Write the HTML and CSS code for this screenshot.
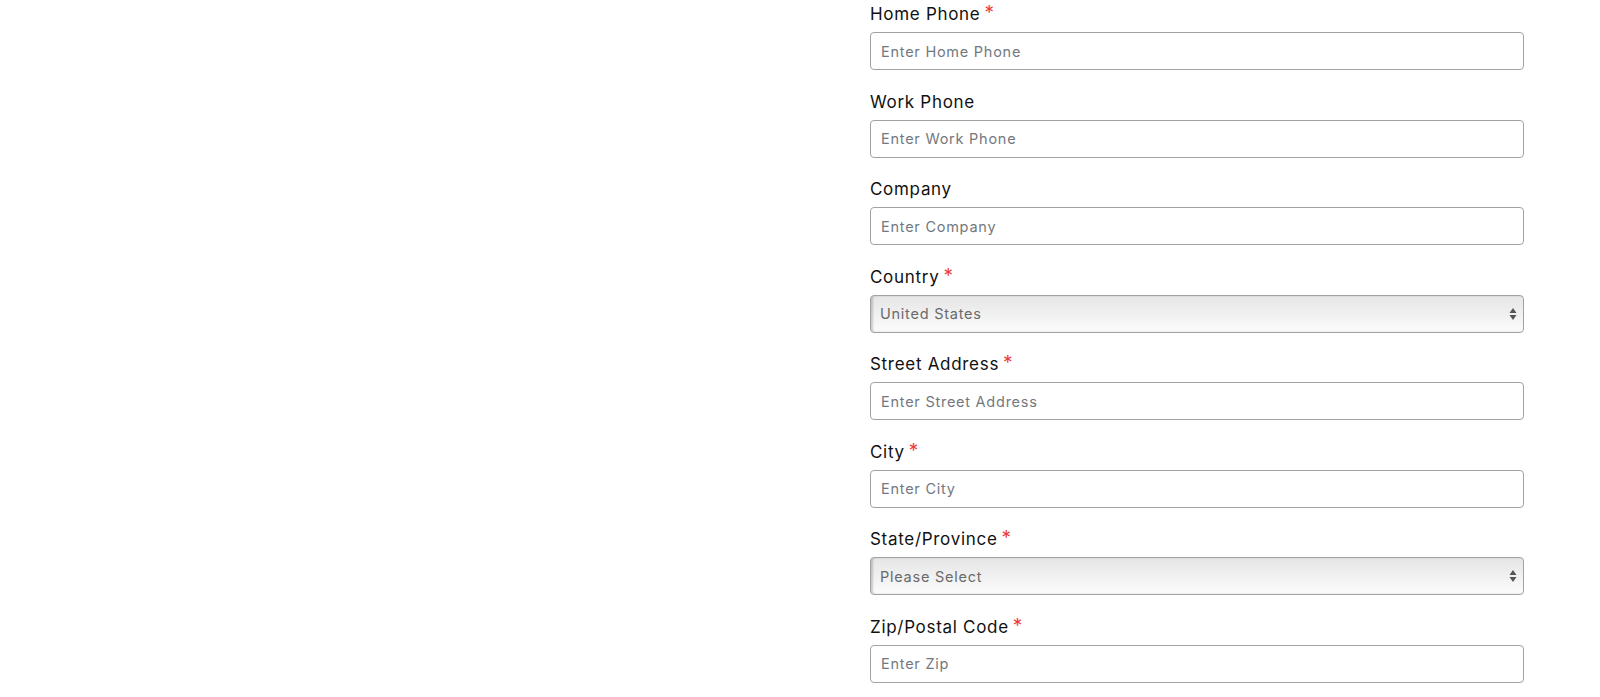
FILE: index.html
```html
<!DOCTYPE html>
<html lang="en">
<head>
<meta charset="utf-8">
<title>Form</title>
<link rel="stylesheet" href="styles.css">
</head>
<body>
<div class="page">
  <div class="spacer"></div>
  <form class="form">
    <div class="field">
      <label class="label">Home Phone<span class="req">*</span></label>
      <input class="input" type="text" placeholder="Enter Home Phone">
    </div>
    <div class="field">
      <label class="label">Work Phone</label>
      <input class="input" type="text" placeholder="Enter Work Phone">
    </div>
    <div class="field">
      <label class="label">Company</label>
      <input class="input" type="text" placeholder="Enter Company">
    </div>
    <div class="field">
      <label class="label">Country<span class="req">*</span></label>
      <div class="select-wrap">
        <select class="select"><option>United States</option></select>
        <svg class="arrows" width="8" height="14" viewBox="0 0 8 14"><path d="M4 1 L7.5 6 L0.5 6 Z M4 13 L7.5 8 L0.5 8 Z" fill="#555"/></svg>
      </div>
    </div>
    <div class="field">
      <label class="label">Street Address<span class="req">*</span></label>
      <input class="input" type="text" placeholder="Enter Street Address">
    </div>
    <div class="field">
      <label class="label">City<span class="req">*</span></label>
      <input class="input" type="text" placeholder="Enter City">
    </div>
    <div class="field">
      <label class="label">State/Province<span class="req">*</span></label>
      <div class="select-wrap">
        <select class="select"><option>Please Select</option></select>
        <svg class="arrows" width="8" height="14" viewBox="0 0 8 14"><path d="M4 1 L7.5 6 L0.5 6 Z M4 13 L7.5 8 L0.5 8 Z" fill="#555"/></svg>
      </div>
    </div>
    <div class="field">
      <label class="label">Zip/Postal Code<span class="req">*</span></label>
      <input class="input" type="text" placeholder="Enter Zip">
    </div>
  </form>
</div>
</body>
</html>
```
FILE: styles.css
```css
html, body {
  margin: 0;
  padding: 0;
  background: #ffffff;
}
body {
  font-family: Inter, "Open Sans", "Liberation Sans", sans-serif;
  color: #111;
  overflow: hidden;
}
.page {
  display: grid;
  grid-template-columns: 870px 654px;
}
.form {
  display: flex;
  flex-direction: column;
  margin: 0;
}
.field {
  display: flex;
  flex-direction: column;
  height: 87.5px;
}
.label {
  display: block;
  font-size: 17px;
  line-height: 24px;
  height: 24px;
  margin-top: 2px;
  margin-bottom: 6px;
  color: #111;
  letter-spacing: 0.7px;
}
.req {
  color: #ef3b3b;
  margin-left: 4px;
  font-size: 19px;
  position: relative;
  top: -1px;
}
.input {
  box-sizing: border-box;
  height: 38px;
  width: 100%;
  border: 1.5px solid #a2a2a2;
  border-radius: 4px;
  padding: 0 10px;
  font-family: Inter, "Open Sans", "Liberation Sans", sans-serif;
  font-size: 14.5px;
  color: #333;
  background: #fff;
  outline: none;
}
.input::placeholder {
  color: #737880;
  letter-spacing: 0.75px;
}
.select-wrap {
  position: relative;
  height: 38px;
}
.select {
  -webkit-appearance: none;
  appearance: none;
  box-sizing: border-box;
  height: 38px;
  width: 100%;
  border: 1.5px solid #a2a2a2;
  border-radius: 4px;
  padding: 0 9px;
  font-family: Inter, "Open Sans", "Liberation Sans", sans-serif;
  font-size: 14.5px;
  letter-spacing: 0.75px;
  color: #6a6a6a;
  background: linear-gradient(to bottom, #e6e6e6 0%, #f0f0f0 50%, #fcfcfc 100%);
  box-shadow: inset 2px 0 2px rgba(0, 0, 0, 0.18);
  outline: none;
}
.arrows {
  position: absolute;
  right: 7px;
  top: 12px;
  pointer-events: none;
}
```
